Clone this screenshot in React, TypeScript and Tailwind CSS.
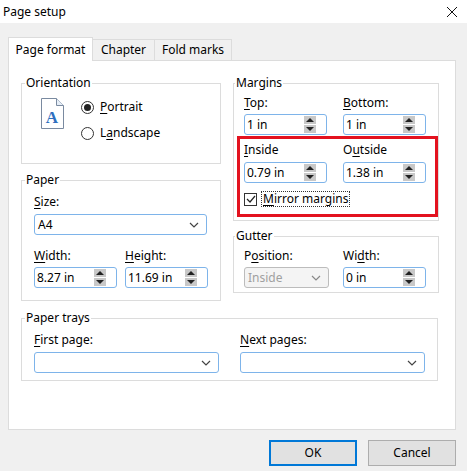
import React from "react";

const U = ({ c, rest }: { c: string; rest: string }) => (
  <span>
    <span className="underline underline-offset-2">{c}</span>
    {rest}
  </span>
);

const Spin = () => (
  <div className="flex flex-col gap-[1px] w-[12px]">
    <div className="h-[8px] bg-[#c8c8c8] flex items-center justify-center">
      <div className="w-0 h-0 border-l-[4px] border-r-[4px] border-b-[4px] border-l-transparent border-r-transparent border-b-[#222]" />
    </div>
    <div className="h-[8px] bg-[#c8c8c8] flex items-center justify-center">
      <div className="w-0 h-0 border-l-[4px] border-r-[4px] border-t-[4px] border-l-transparent border-r-transparent border-t-[#222]" />
    </div>
  </div>
);

const SpinBox = ({ v, w = "w-[83px]" }: { v: string; w?: string }) => (
  <div className={`${w} h-[21px] border border-[#7eb4ea] rounded-[3px] bg-white flex items-center justify-between pl-[2px] pr-[10px]`}>
    <span>{v}</span>
    <Spin />
  </div>
);

const Chevron = ({ color = "#444" }: { color?: string }) => (
  <svg width="10" height="6" viewBox="0 0 10 6">
    <path d="M1 1l4 4 4-4" fill="none" stroke={color} strokeWidth="1.2" />
  </svg>
);

const Select = ({ v = "", w, disabled = false }: { v?: string; w: string; disabled?: boolean }) => (
  <div
    className={`${w} h-[21px] rounded-[3px] flex items-center justify-between pl-[3px] pr-[7px] ${
      disabled ? "border border-[#bcbcbc] bg-[#f4f4f4] text-[#a0a0a0]" : "border border-[#7eb4ea] bg-white"
    }`}
  >
    <span>{v}</span>
    <Chevron color={disabled ? "#888" : "#444"} />
  </div>
);

const Group = ({ title, className, children }: { title: string; className: string; children: React.ReactNode }) => (
  <fieldset className={`border border-[#dcdcdc] px-[12px] ${className}`}>
    <legend className="px-[1px] ml-[-9px] leading-[14px]">{title}</legend>
    {children}
  </fieldset>
);

export default function App() {
  return (
    <div
      className="w-[467px] h-[471px] bg-[#f0f0f0] text-[12px] text-black flex flex-col"
      style={{ fontFamily: '"Noto Sans", "Liberation Sans", sans-serif' }}
    >
      <div className="h-[23px] bg-white flex items-center justify-between pl-[3px] pr-[10px] shrink-0">
        <span className="text-[12px]">Page setup</span>
        <svg width="10" height="10" viewBox="0 0 10 10">
          <path d="M0 0L10 10M10 0L0 10" stroke="#111" strokeWidth="1" />
        </svg>
      </div>
      <div className="flex mt-[15px] ml-[8px] h-[23px] relative z-10">
        <div className="w-[85px] h-[24px] bg-white border border-[#dcdcdc] border-b-0 flex items-center justify-center mt-[-1px]">
          Page format
        </div>
        <div className="w-[62px] h-[22px] mt-[1px] bg-[#f0f0f0] border border-[#dcdcdc] border-l-0 flex items-center justify-center">
          Chapter
        </div>
        <div className="w-[77px] h-[22px] mt-[1px] bg-[#f0f0f0] border border-[#dcdcdc] border-l-0 flex items-center justify-center">
          Fold marks
        </div>
      </div>
      <div className="ml-[8px] w-[448px] h-[370px] bg-white border border-[#dcdcdc] mt-[-1px] pt-[15px] pl-[12px] pr-[17px]">
        <div className="flex gap-[12px]">
          <div className="flex flex-col w-[200px] gap-[9px]">
            <Group title="Orientation" className="h-[88px]">
              <div className="flex items-start gap-[17px] pl-[7px] pt-[8px]">
                <svg width="23" height="31" viewBox="0 0 23 31">
                  <path d="M0.5 0.5H15.5L22.5 7.5V30.5H0.5Z" fill="#fff" stroke="#7a8aa0" />
                  <path d="M15.5 0.5V7.5H22.5" fill="#e6eef7" stroke="#7a8aa0" />
                  <text x="11" y="25" textAnchor="middle" fontFamily="Liberation Serif, serif" fontWeight="bold" fontSize="17" fill="#2f6fbf">A</text>
                </svg>
                <div className="flex flex-col gap-[8px] pt-[0px]">
                  <div className="flex items-center gap-[6px]">
                    <div className="w-[13px] h-[13px] rounded-full border border-[#333] flex items-center justify-center">
                      <div className="w-[7px] h-[7px] rounded-full bg-[#222]" />
                    </div>
                    <U c="P" rest="ortrait" />
                  </div>
                  <div className="flex items-center gap-[6px]">
                    <div className="w-[13px] h-[13px] rounded-full border border-[#333]" />
                    <span>
                      L<span className="underline underline-offset-2">a</span>ndscape
                    </span>
                  </div>
                </div>
              </div>
            </Group>
            <Group title="Paper" className="h-[128px]">
              <div className="pt-[8px] leading-[14px]"><U c="S" rest="ize:" /></div>
              <div className="mt-[5px]"><Select v="A4" w="w-[173px]" /></div>
              <div className="flex gap-[8px] mt-[14px] leading-[14px]">
                <div className="w-[83px]"><U c="W" rest="idth:" /></div>
                <div><U c="H" rest="eight:" /></div>
              </div>
              <div className="flex gap-[8px] mt-[4px]">
                <SpinBox v="8.27 in" />
                <SpinBox v="11.69 in" />
              </div>
            </Group>
          </div>
          <div className="flex flex-col w-[205px] gap-[8px]">
            <Group title="Margins" className="h-[145px] pl-[10px] pr-[0px]">
              <div className="flex gap-[16px] pt-[6px] leading-[14px]">
                <div className="w-[83px]"><U c="T" rest="op:" /></div>
                <div><U c="B" rest="ottom:" /></div>
              </div>
              <div className="flex gap-[16px] mt-[4px]">
                <SpinBox v="1 in" />
                <SpinBox v="1 in" />
              </div>
              <div className="ml-[-7px] w-[201px] h-[81px] border-[3px] border-[#e3121f] mt-[1px] pl-[4px] pt-[4px]">
                <div className="flex gap-[16px] leading-[14px]">
                  <div className="w-[83px]"><U c="I" rest="nside" /></div>
                  <div>
                    O<span className="underline underline-offset-2">u</span>tside
                  </div>
                </div>
                <div className="flex gap-[16px] mt-[5px]">
                  <SpinBox v="0.79 in" />
                  <SpinBox v="1.38 in" />
                </div>
                <div className="flex items-center gap-[4px] mt-[8px]">
                  <div className="w-[13px] h-[13px] border border-[#333] flex items-center justify-center">
                    <svg width="10" height="8" viewBox="0 0 10 8">
                      <path d="M1 4l3 3 5-6" fill="none" stroke="#222" strokeWidth="1.2" />
                    </svg>
                  </div>
                  <span className="border border-dotted border-[#333] px-[1px] leading-[14px]">
                    <U c="M" rest="irror margins" />
                  </span>
                </div>
              </div>
            </Group>
            <Group title="Gutter" className="h-[64px] pl-[10px]">
              <div className="flex gap-[14px] pt-[6px] leading-[14px]">
                <div className="w-[85px]">
                  P<span className="underline underline-offset-2">o</span>sition:
                </div>
                <div>
                  Wi<span className="underline underline-offset-2">d</span>th:
                </div>
              </div>
              <div className="flex gap-[14px] mt-[4px]">
                <Select v="Inside" w="w-[85px]" disabled />
                <SpinBox v="0 in" />
              </div>
            </Group>
          </div>
        </div>
        <Group title="Paper trays" className="mt-[10px] h-[70px] w-[417px]">
          <div className="flex gap-[21px] pt-[8px] leading-[14px]">
            <div className="w-[185px]"><U c="F" rest="irst page:" /></div>
            <div><U c="N" rest="ext pages:" /></div>
          </div>
          <div className="flex gap-[21px] mt-[5px]">
            <Select w="w-[185px]" />
            <Select w="w-[185px]" />
          </div>
        </Group>
      </div>
      <div className="flex justify-end gap-[11px] pr-[11px] mt-[10px]">
        <div className="w-[88px] h-[26px] bg-[#e1e1e1] border-2 border-[#0078d7] flex items-center justify-center">OK</div>
        <div className="w-[88px] h-[26px] bg-[#e1e1e1] border border-[#adadad] flex items-center justify-center">Cancel</div>
      </div>
    </div>
  );
}
